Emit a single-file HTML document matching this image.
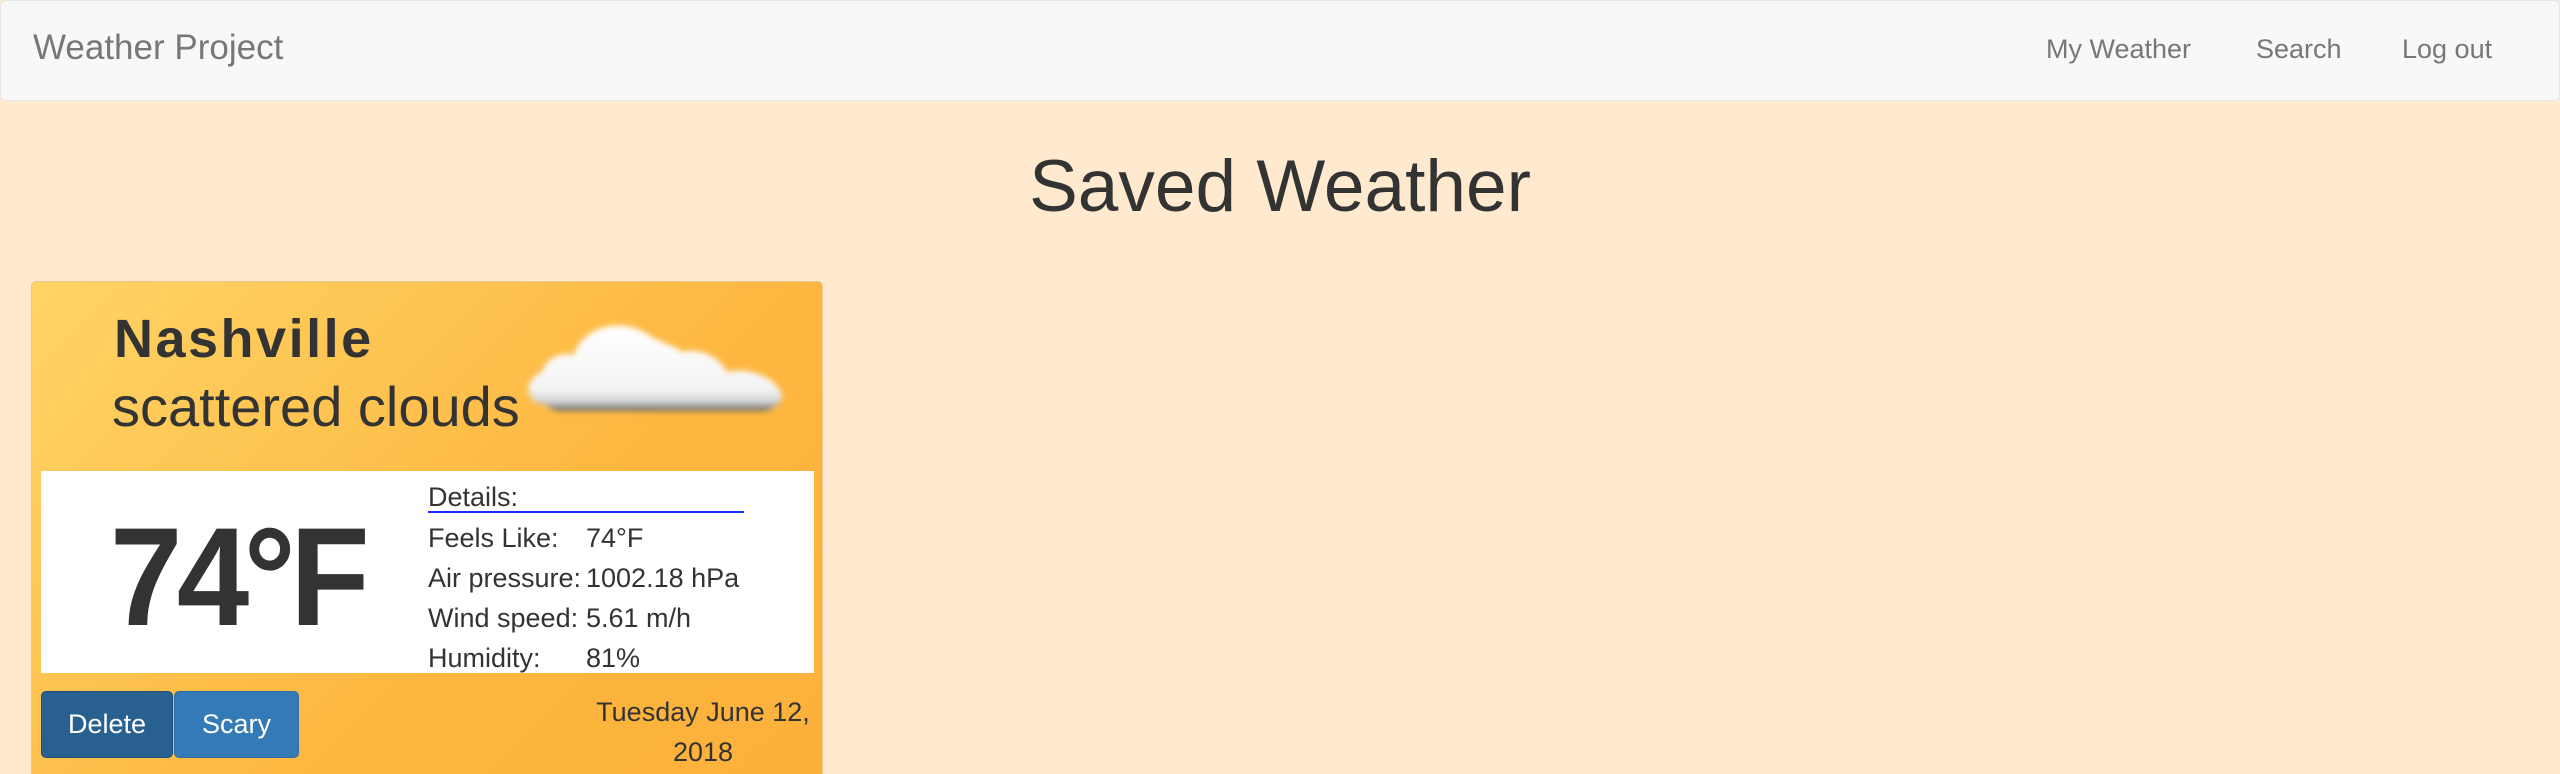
<!DOCTYPE html>
<html><head><style>
html,body{margin:0;width:2560px;height:774px;overflow:hidden}
body{background:#ffeacf;font-family:"Liberation Sans",Arial,sans-serif;position:relative;color:#333}
.nav{position:absolute;left:0;top:0;width:2558px;height:99px;background:#f8f8f8;border:1px solid #e7e7e7;border-radius:6px}
.nav span{position:absolute;color:#777;font-size:27px;top:33px}
h1{position:absolute;margin:0;top:145px;left:0;width:2560px;text-align:center;font-size:73px;font-weight:normal;color:#333}
.card{position:absolute;left:31px;top:281px;width:790px;height:500px;border:1px solid #e8c890;border-radius:5px;background:linear-gradient(135deg,#ffd466,#fdb740 60%,#fcb03a)}
.wb{position:absolute;left:9px;top:189px;width:773px;height:202px;background:#fff}
.t{position:absolute;white-space:nowrap}
.btn{position:absolute;top:409px;height:65px;border-radius:5px;color:#fff;font-size:27px;text-align:center;line-height:64px}
</style></head><body>
<div class="nav">
<span style="left:32px;top:27px;font-size:35px">Weather Project</span>
<span style="left:2045px">My Weather</span>
<span style="left:2255px">Search</span>
<span style="left:2401px">Log out</span>
</div>
<h1>Saved Weather</h1>
<div class="card">
<div class="t" style="left:82px;top:26px;font-size:54px;font-weight:bold;letter-spacing:2.5px">Nashville</div>
<div class="t" style="left:80px;top:92px;font-size:56px">scattered clouds</div>
<svg style="position:absolute;left:470px;top:25px" width="320" height="120" viewBox="0 0 320 120">
<defs><filter id="b"><feGaussianBlur stdDeviation="3"/></filter>
<linearGradient id="g" x1="0" y1="0" x2="0" y2="1"><stop offset="0" stop-color="#fff"/><stop offset="0.75" stop-color="#f4f4f4"/><stop offset="0.9" stop-color="#cfcfcf"/><stop offset="1" stop-color="#555"/></linearGradient></defs>
<g filter="url(#b)">
<path d="M45 98 C25 98 18 75 40 65 C45 50 60 45 72 48 C80 20 120 8 150 30 C165 38 175 40 180 45 C205 40 220 55 225 65 C245 60 270 70 275 80 C285 88 280 100 262 104 L60 104 C50 104 45 100 45 98Z" fill="url(#g)"/>
</g></svg>
<div class="wb"></div>
<div class="t" style="left:78px;top:214px;font-size:140px;font-weight:bold;letter-spacing:-6px;transform:scaleX(0.93);transform-origin:0 0">74°F</div>
<div class="t" style="left:396px;top:195px;font-size:27px;line-height:40px">Details:</div>
<div style="position:absolute;left:396px;top:229px;width:316px;height:2px;background:#1a2cff"></div>
<div class="t" style="left:396px;top:236px;font-size:27px;line-height:40px">Feels Like:<br>Air pressure:<br>Wind speed:<br>Humidity:</div>
<div class="t" style="left:554px;top:236px;font-size:27px;line-height:40px">74°F<br>1002.18 hPa<br>5.61 m/h<br>81%</div>
<div class="btn" style="left:9px;width:130px;background:#286090;border:1px solid #204d74">Delete</div>
<div class="btn" style="left:142px;width:123px;background:#337ab7;border:1px solid #2e6da4">Scary</div>
<div class="t" style="left:560px;top:410px;width:222px;text-align:center;font-size:27px;line-height:40px;white-space:normal">Tuesday June 12, 2018</div>
</div>
</body></html>
